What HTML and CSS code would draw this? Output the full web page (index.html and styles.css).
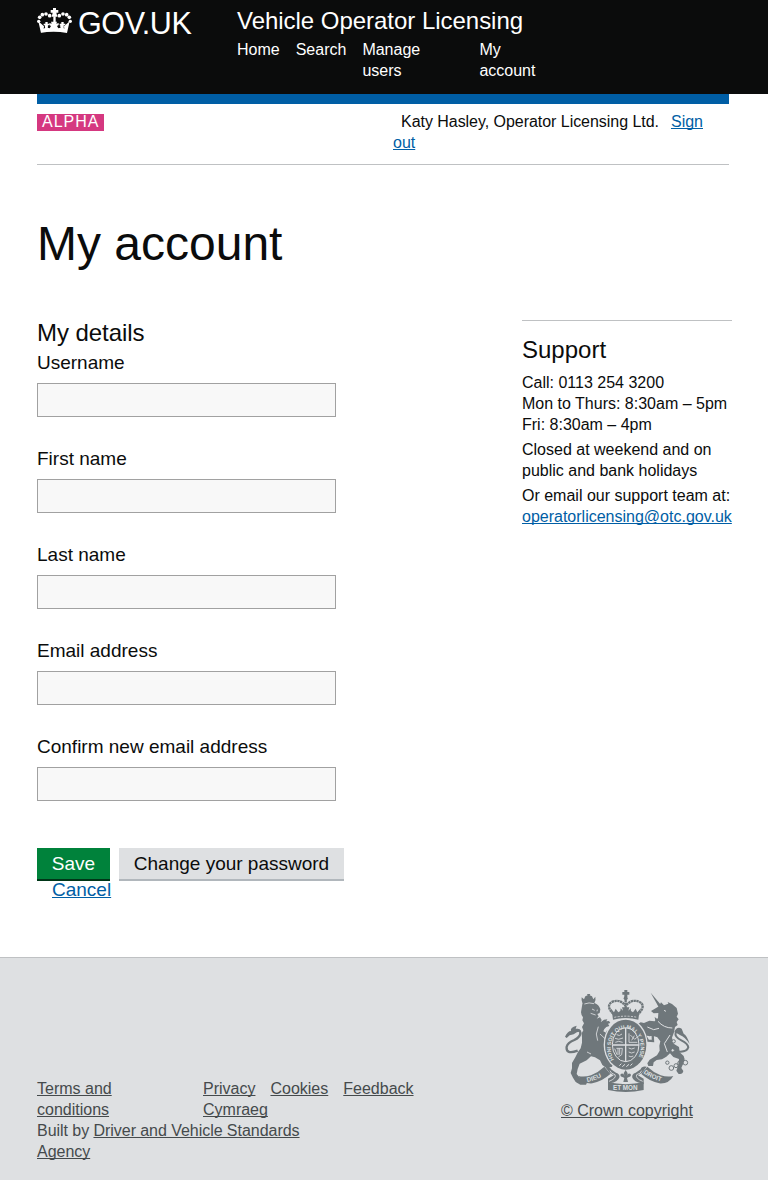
FILE: index.html
```html
<!DOCTYPE html>
<html lang="en">
<head>
<meta charset="utf-8">
<title>My account</title>
<link rel="stylesheet" href="styles.css">
</head>
<body>
<header class="site-header">
  <a class="brand" href="#">
    <svg class="crown" viewBox="0 0 105 78" fill="#fff">
      <path d="M48 0h9v6h7v8h-6l3 12h-17l3-12h-6v-8h7zM12 75L4 40l17 15-1 7 5-3-2-6 5-6 5 6-2 6 7 2 4-7-5-3v-6l7 2-2-6h18l-2 6 7-2v6l-5 3 4 7 7-2-2-6 5-6 5 6-2 6 5 3-1-7 17-15-8 35q-40-7-81 0z"/>
      <path d="M49 25h7v17h-7z"/>
      <path d="M25 42h7v24h-7zM73 42h7v24h-7zM20 47h17v5H20zM68 47h17v5H68z"/>
      <circle cx="5" cy="40" r="5"/><circle cx="8" cy="28" r="5.5"/><circle cx="16" cy="20" r="5.5"/><circle cx="27" cy="18" r="5.5"/><circle cx="38" cy="23" r="5.5"/>
      <circle cx="100" cy="40" r="5"/><circle cx="97" cy="28" r="5.5"/><circle cx="89" cy="20" r="5.5"/><circle cx="78" cy="18" r="5.5"/><circle cx="67" cy="23" r="5.5"/>
    </svg>
    <span class="brand-name">GOV.UK</span>
  </a>
  <div class="service">
    <div class="service-name">Vehicle Operator Licensing</div>
    <nav class="service-nav">
      <a href="#">Home</a><a href="#">Search</a><a class="nav-manage" href="#">Manage users</a><a class="nav-account" href="#">My account</a>
    </nav>
  </div>
</header>
<div class="container">
  <div class="blue-bar"></div>
  <div class="phase-banner">
    <strong class="phase-tag">ALPHA</strong>
    <p class="user"><span class="user-name">Katy Hasley, Operator Licensing Ltd.</span><a href="#">Sign out</a></p>
  </div>
  <h1>My account</h1>
  <main class="columns">
    <form class="details">
      <h2>My details</h2>
      <label class="field">Username<input type="text"></label>
      <label class="field">First name<input type="text"></label>
      <label class="field">Last name<input type="text"></label>
      <label class="field">Email address<input type="text"></label>
      <label class="field">Confirm new email address<input type="text"></label>
      <div class="actions">
        <button class="button save" type="button">Save</button>
        <button class="button change" type="button">Change your password</button>
      </div>
      <a class="cancel" href="#">Cancel</a>
    </form>
    <aside class="support">
      <h2>Support</h2>
      <p>Call: 0113 254 3200<br>Mon to Thurs: 8:30am – 5pm<br>Fri: 8:30am – 4pm</p>
      <p>Closed at weekend and on public and bank holidays</p>
      <p>Or email our support team at:<br><a href="#">operatorlicensing@otc.gov.uk</a></p>
    </aside>
  </main>
</div>
<footer class="site-footer">
  <div class="footer-meta">
    <div class="footer-links">
      <a class="terms" href="#">Terms and conditions</a>
      <div class="footer-others"><a href="#">Privacy</a><a href="#">Cookies</a><a href="#">Feedback</a><a href="#">Cymraeg</a></div>
    </div>
    <p class="built">Built by <a href="#">Driver and Vehicle Standards Agency</a></p>
  </div>
  <div class="copyright">
    <svg class="crest" viewBox="30 30 375 306" fill="#6f777b">
      <!-- crown -->
      <g>
        <path d="M208 30h9v6h6v8h-6v8h-9v-8h-6v-8h6z"/>
        <circle cx="212" cy="55" r="6"/>
        <path d="M175 102Q150 76 173 65Q196 56 212 78Q229 56 252 65Q275 76 250 102M212 60V104" fill="none" stroke="#6f777b" stroke-width="7" stroke-dasharray="7 1.5"/>
        <path d="M172 104L166 84l11 13 5-11 8 11 6-4 1-8 7 7-3-10h22l-3 10 7-7 1 8 6 4 8-11 5 11 11-13-6 20-2 15q-37-8-76 0z"/>
        <path d="M178 112q34-7 69 0" fill="none" stroke="#dee0e2" stroke-width="2.5" stroke-dasharray="6 4"/>
      </g>
      <!-- lion -->
      <path d="M83 72q-5-12-3-20l7 6 4-9 7-3-2-4h10l-2 4 7 3 4 9 6-8q3 10-4 22z"/>
      <path d="M82 72q18-8 38-2 12 5 16 18l-2 11-7 3 4 7-6 7 10-4 5 8-3 7 10-8 10-1-3 6 8-1 4 6-7 2 4 7-9 3q-9 7-9 13l8 4 2-6 10-3 1 6 6 3-3 6 3 6-9 2-10-1 0 14 8 12 2 19-4 12 3 9 9 9q6 8-1 15h-20l-8-6-7-14-15-9-12-3-13 12-21 10-6 16-3 15 8 10 18 8q8 6 2 14H76l-14-8-8-13-7-14 4-14v-16l10-17 8-16 8-11 4-17 0-15-1-13 5-9-4-10 6-11-5-9 2-9q-6-8-6-15z"/>
      <path d="M88 72q14-6 29-1M111 87l8 4M127 89l-1 5M107 100l15 5M130 140l-6 22 4 20M108 222l-12-6M135 162l15 14" fill="none" stroke="#dee0e2" stroke-width="2.5"/>
      <path d="M68 212Q32 225 35 200Q38 188 58 180Q78 170 76 157Q72 147 62 151" fill="none" stroke="#6f777b" stroke-width="7"/>
      <path d="M30 170q8-17 18-17-4-11 17-16l-3 9q12-1 16 8-14 1-22 9l-12 3-9 8z"/>
      <!-- unicorn -->
      <path d="M287 38l33 39-8 6z"/>
      <path d="M312 79l6-12 9 9 13-5-2-5 13 6 14 12 4 17-4 9 6 8-6 8 3 9-8 6-3 16-6 16 5 18 16 10 2 16 12 11 3 10-5 14-5 12 6 9q-2 11-15 8l-6-9 6-17 2-18-17-6-10-11-11 10-13 8-16 2-9 7-2 11h-14l-3-8 7-11 22-13 8-14-1-15 3-13-9-12-14-5-10 2-14-8-8-12-13-3-4-11 13-8 10 2 16-7 16 2 10-10 1-15-14 1-8-7z"/>
      <path d="M301 122l-2-11 9 7 7-10 4 11 10-4 1 11 10-2 0 11 12-5 3 20q-32-2-54-28z"/>
      <path d="M309 124q17 20 43 20M327 91l6 3M277 141l19 8 16-4M345 165l-17 26 9 25" fill="none" stroke="#dee0e2" stroke-width="3"/>
      <path d="M272 142l-5 11 8 11 18-1 1 20-15-1-8-14" fill="none" stroke="#6f777b" stroke-width="7"/>
      <path d="M359 213Q395 220 400 202Q399 191 379 181Q358 171 362 158Q367 151 376 160" fill="none" stroke="#6f777b" stroke-width="6"/>
      <path d="M358 155q8-17 22-9l6 15q10 5 18 31-16-22-28-26z"/>
      <g fill="none" stroke="#6f777b" stroke-width="3"><circle cx="337" cy="248" r="5"/><circle cx="349" cy="264" r="7"/><circle cx="363" cy="257" r="6"/><circle cx="375" cy="250" r="7"/><circle cx="391" cy="248" r="7"/></g>
      <g fill="#dee0e2" stroke="#6f777b" stroke-width="3"><circle cx="353" cy="211" r="5"/><circle cx="356" cy="184" r="5"/></g>
      <!-- shield and garter -->
      <ellipse cx="212" cy="194" rx="66" ry="79" fill="#dee0e2"/>
      <ellipse cx="212" cy="194" rx="62" ry="75"/>
      <ellipse cx="212" cy="194" rx="40" ry="51" fill="none" stroke="#dee0e2" stroke-width="3"/>
      <path id="garter" d="M177 239A45 57 0 1 1 247 239" fill="none"/>
      <text class="garter-text"><textPath href="#garter">HONI SOIT QUI MAL Y PENSE</textPath></text>
      <path d="M212 144v101M173 195h79" stroke="#dee0e2" stroke-width="4"/>
      <g fill="none" stroke="#dee0e2" stroke-width="2.5">
        <path d="M185 164q8 6 16-2M180 175q10 6 24-1M181 187q9-6 22 0M222 160v27h25M226 165l13 13 8-7M230 181l8-14M221 204q8 6 18 0M221 216q8 6 18 0M221 228q7 5 14 0M184 205h18l-2 19-10 7M189 205v20M194 205v19M179 206l7 18"/>
      </g>
      <path d="M193 257l6-6M202 260l8-7M214 260l8-7M226 257l6-6" stroke="#dee0e2" stroke-width="3"/>
      <!-- motto ribbon -->
      <path d="M70 288Q88 292 108 286Q130 277 148 260L166 282Q140 305 112 310Q83 312 70 288zM355 288Q337 292 317 286Q295 277 277 260L259 282Q285 305 313 310Q342 312 355 288z"/>
      <path d="M150 260q15-3 18 8l15 10q13 4 10 15-5 12-28 17l-6 3v-17l17-10-12-7zM275 260q-15-3-18 8l-15 10q-13 4-10 15 5 12 28 17l6 3v-17l-17-10 12-7z"/>
      <path d="M159 307Q212 318 266 307V330Q212 342 159 330z"/>
      <path d="M165 272q2 9 15 12 5 11-18 20M260 272q-2 9-15 12-5 11 18 20" fill="none" stroke="#dee0e2" stroke-width="2.5"/>
      <path id="dieu" d="M97 306Q130 300 163 277" fill="none"/>
      <path id="droit" d="M265 279Q295 302 341 309" fill="none"/>
      <text class="motto"><textPath href="#dieu">DIEU</textPath></text>
      <text class="motto"><textPath href="#droit">DROIT</textPath></text>
      <text class="motto" x="174" y="331">ET MON</text>
      <path d="M212 270l6 10-3 9q3-12 12-7 3 8-7 10l-4 2 3 12h-14l3-12-4-2q-10-2-7-10 9-5 12 7l-3-9z"/>
    </svg>
    <a href="#">© Crown copyright</a>
  </div>
</footer>
</body>
</html>
```
FILE: styles.css
```css
* { box-sizing: border-box; }
body {
  margin: 0;
  background: #fff;
  color: #0b0c0c;
  font: 16px/21px "Liberation Sans", Arial, sans-serif;
}
h1, h2, p { margin: 0; font-weight: 400; }
a { color: #005ea5; text-decoration-skip-ink: none; }
.site-header {
  display: flex;
  height: 94px;
  padding: 6px 37px 0;
  background: #0b0c0c;
  color: #fff;
}
.site-header a { color: #fff; text-decoration: none; }
.brand { display: flex; width: 200px; }
.crown { width: 35px; height: 26px; margin-top: 2px; }
.brand-name {
  margin-left: 6px;
  font-size: 30.5px;
  line-height: 34px;
  letter-spacing: -0.4px;
}
.service-name { font-size: 24px; line-height: 30px; letter-spacing: -0.03px; }
.service-nav { display: flex; gap: 16px; margin-top: 3px; }
.nav-manage { width: 101px; padding-right: 30px; }
.nav-account { width: 60px; }
.container { padding: 0 39px 0 37px; }
.blue-bar { height: 10px; background: #005ea5; }
.phase-banner {
  display: flex;
  justify-content: space-between;
  height: 61px;
  padding-top: 7px;
  border-bottom: 1px solid #bfc1c3;
}
.phase-tag {
  height: 17px;
  width: 67px;
  margin-top: 3px;
  padding-left: 5px;
  background: #d53880;
  color: #fff;
  font-weight: 400;
  line-height: 16px;
  letter-spacing: 1px;
}
.user { width: 336px; }
.user-name { margin: 0 12px 0 8px; letter-spacing: -0.04px; }
h1 { margin-top: 54px; font-size: 48px; line-height: 50px; }
h2 { font-size: 24px; line-height: 30px; }
.columns { display: flex; justify-content: space-between; margin: 49px -3px 0 0; }
.details { width: 320px; font-size: 19px; line-height: 25px; }
.field { display: block; height: 96px; padding-top: 2px; }
.field input {
  display: block;
  width: 299px;
  height: 34px;
  margin-top: 8px;
  border: 1px solid #a1a1a1;
  background: #f8f8f8;
}
.details h2 { height: 30px; letter-spacing: -0.05px; }
.actions { display: flex; gap: 9px; margin-top: 20px; }
.button {
  height: 33px;
  padding: 0 0 2px;
  border: 0;
  font: 19px/30px "Liberation Sans", Arial, sans-serif;
}
.save { width: 73px; background: #00823b; color: #fff; box-shadow: inset 0 -2px #003618; }
.change { width: 225px; background: #dee0e2; color: #0b0c0c; box-shadow: inset 0 -2px #b1b7bc; }
.cancel { display: block; width: max-content; margin: -4px 0 0 15px; }
.support { width: 210px; margin-top: 2px; padding-top: 14px; border-top: 1px solid #bfc1c3; }
.support h2 { margin-bottom: 7px; }
.support p { margin-bottom: 4px; }
.site-footer {
  display: flex;
  justify-content: space-between;
  height: 223px;
  margin-top: 55px;
  padding: 32px 75px 0 37px;
  border-top: 1px solid #bfc1c3;
  background: #dee0e2;
  color: #454a4c;
}
.site-footer a { color: #454a4c; }
.footer-meta { width: 400px; padding-top: 88px; }
.footer-links { display: flex; }
.terms { width: 166px; padding-right: 60px; }
.footer-others { display: flex; flex-wrap: wrap; width: 230px; column-gap: 15px; }
.built { width: 280px; letter-spacing: -0.03px; word-spacing: -0.1px; }
.copyright { display: flex; flex-direction: column; width: 132px; }
.copyright a { white-space: nowrap; }
.crest { width: 125px; height: 102px; margin: 0 0 8px 4px; }
.garter-text { fill: #dee0e2; font-size: 16px; font-weight: 700; }
.motto { fill: #dee0e2; font-size: 19px; font-weight: 700; }
```
